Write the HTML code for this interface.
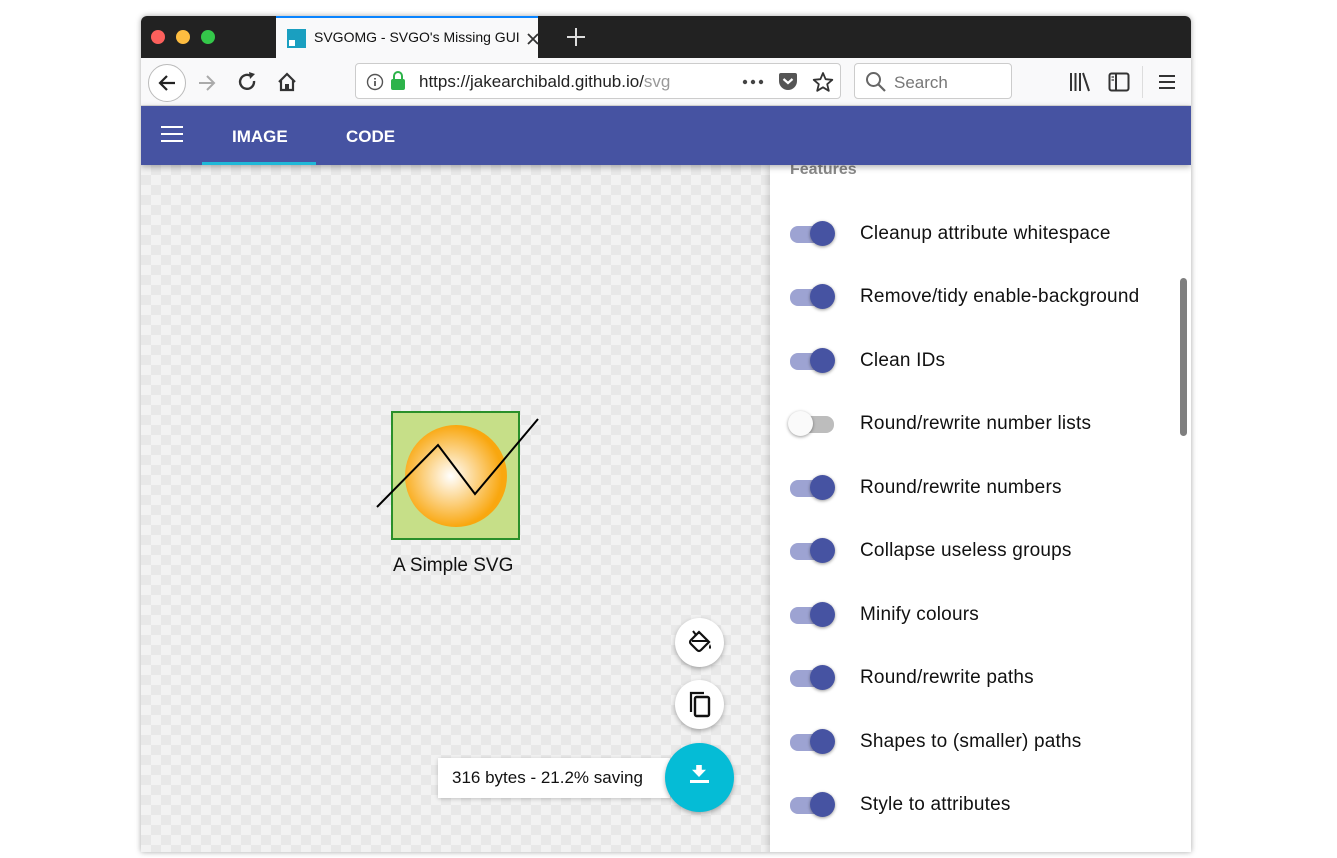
<!DOCTYPE html>
<html><head><meta charset="utf-8"><style>
*{margin:0;padding:0;box-sizing:border-box}
body{width:1337px;height:858px;background:#fff;font-family:"Liberation Sans",sans-serif;position:relative;overflow:hidden}
.win{position:absolute;left:141px;top:16px;width:1050px;height:836px;border-radius:6px 6px 0 0;overflow:hidden;box-shadow:0 0 6px rgba(0,0,0,.35)}
.title{position:absolute;left:0;top:0;width:100%;height:42px;background:#222}
.dot{position:absolute;top:14px;width:14px;height:14px;border-radius:50%}
.tab{position:absolute;left:135px;top:0;width:262px;height:42px;background:#f9f9fa;border-top:2px solid #0a84ff}
.toolbar{position:absolute;left:0;top:42px;width:100%;height:48px;background:#f9f9fa;border-bottom:1px solid #ddd}
.url{position:absolute;left:214px;top:5px;width:486px;height:36px;border:1px solid #ccc;border-radius:4px;background:#fff}
.search{position:absolute;left:713px;top:5px;width:158px;height:36px;border:1px solid #ccc;border-radius:4px;background:#fff}
.blue{position:absolute;left:0;top:90px;width:100%;height:59px;background:#4653a2;z-index:3;box-shadow:0 2px 6px rgba(0,0,0,.3)}
.blue span{position:absolute;top:21px;color:#fff;font-weight:bold;font-size:17px}
.canvas{position:absolute;left:0;top:149px;width:629px;height:700px;background-color:#f2f2f2;background-image:linear-gradient(45deg,#e8e8e8 25%,transparent 25%,transparent 75%,#e8e8e8 75%),linear-gradient(45deg,#e8e8e8 25%,transparent 25%,transparent 75%,#e8e8e8 75%);background-size:20px 20px;background-position:0 0,10px 10px}
.panel{position:absolute;left:629px;top:149px;width:421px;height:700px;background:#fff;box-shadow:-2px 0 6px rgba(0,0,0,.15)}
.row{position:absolute;left:20px;height:30px;width:390px}
.trk{position:absolute;left:0;top:9px;width:44px;height:17px;border-radius:8px;background:#9da3d2}
.knb{position:absolute;left:20px;top:4px;width:25px;height:25px;border-radius:50%;background:#4653a2;box-shadow:0 1px 3px rgba(0,0,0,.4)}
.off .trk{background:#bdbdbd}.off .knb{left:-2px;background:#fafafa}
.row span{position:absolute;left:70px;top:6px;font-size:19px;letter-spacing:0.2px;color:#111}
.fab{position:absolute;border-radius:50%;background:#fff;box-shadow:0 2px 5px rgba(0,0,0,.3)}
svg{position:absolute}
</style></head><body>
<div class="win">
<div class="title">
<div class="dot" style="left:10px;background:#fc605c"></div>
<div class="dot" style="left:35px;background:#fdbc40"></div>
<div class="dot" style="left:60px;background:#34c84a"></div>
<div class="tab"><div style="position:absolute;left:11px;top:11px;width:19px;height:19px;background:#1a9fc0"></div><div style="position:absolute;left:13px;top:22px;width:6px;height:6px;background:#fff"></div>
<span style="position:absolute;left:38px;top:11px;font-size:14px;color:#111">SVGOMG - SVGO's Missing GUI</span>
<svg style="left:251px;top:15px" width="12" height="12"><path d="M1 1L11 11M11 1L1 11" stroke="#333" stroke-width="1.8"/></svg></div>
<svg style="left:425px;top:11px" width="20" height="20"><path d="M10 1V19M1 10H19" stroke="#ddd" stroke-width="2"/></svg>
</div>
<div class="toolbar">
<div style="position:absolute;left:7px;top:6px;width:38px;height:38px;border:1px solid #bbb;border-radius:50%;background:#fff"></div>
<svg style="left:16px;top:15px" width="20" height="20"><path d="M18 10H3M10 3L3 10L10 17" stroke="#222" stroke-width="2.2" fill="none"/></svg>
<svg style="left:56px;top:15px" width="20" height="20"><path d="M2 10H17M10 3L17 10L10 17" stroke="#aaa" stroke-width="2" fill="none"/></svg>
<svg style="left:97px;top:14px" width="20" height="20"><path d="M16 9A7 7 0 1 1 12 3.5" stroke="#333" stroke-width="2.4" fill="none"/><path d="M11 0L17 2L12 7Z" fill="#333"/></svg>
<svg style="left:136px;top:14px" width="20" height="20"><path d="M2 10L10 2L18 10M4 8V18H16V8" stroke="#333" stroke-width="2.2" fill="none"/><rect x="8" y="12" width="4" height="6" fill="#333"/></svg>
<div class="url">
<svg style="left:10px;top:9px" width="18" height="18"><circle cx="9" cy="9" r="7.5" stroke="#555" stroke-width="1.4" fill="none"/><path d="M9 8V13M9 5V6.5" stroke="#555" stroke-width="1.8"/></svg>
<div style="position:absolute;left:35px;top:15px;width:14px;height:11px;background:#2db34a;border-radius:2px"></div><div style="position:absolute;left:37px;top:7px;width:10px;height:10px;border:2px solid #2db34a;border-radius:5px 5px 0 0"></div>
<span style="position:absolute;left:63px;top:8px;font-size:17px;color:#222">https://jakearchibald.github.io/<span style="color:#999">svg</span></span>
<svg style="left:386px;top:15px" width="22" height="6"><circle cx="3" cy="3" r="2.2" fill="#444"/><circle cx="11" cy="3" r="2.2" fill="#444"/><circle cx="19" cy="3" r="2.2" fill="#444"/></svg>
<svg style="left:422px;top:8px" width="20" height="20"><path d="M1 3Q1 1 3 1H17Q19 1 19 3V9A9 9 0 0 1 1 9Z" fill="#555"/><path d="M5.5 7L10 11L14.5 7" stroke="#fff" stroke-width="2.2" fill="none"/></svg>
<svg style="left:456px;top:7px" width="22" height="22"><path d="M11 2L13.6 8.2L20.3 8.8L15.2 13.2L16.8 19.8L11 16.3L5.2 19.8L6.8 13.2L1.7 8.8L8.4 8.2Z" stroke="#333" stroke-width="1.8" fill="none" stroke-linejoin="round"/></svg></div>
<div class="search">
<svg style="left:10px;top:7px" width="22" height="22"><circle cx="8.5" cy="8.5" r="6.5" stroke="#666" stroke-width="2" fill="none"/><path d="M13 13L20 20" stroke="#666" stroke-width="2.2"/></svg>
<span style="position:absolute;left:39px;top:9px;font-size:17px;color:#777">Search</span></div>
<svg style="left:928px;top:14px" width="22" height="20"><path d="M2 1V19M6.5 1V19M11 1V19M14 1L20 19" stroke="#333" stroke-width="2"/></svg>
<svg style="left:967px;top:14px" width="22" height="20"><rect x="1.5" y="1.5" width="19" height="17" rx="2" stroke="#333" stroke-width="2" fill="none"/><path d="M8 2V18" stroke="#333" stroke-width="2"/><path d="M3.5 5H6M3.5 8H6" stroke="#333" stroke-width="1.3"/></svg>
<div style="position:absolute;left:1001px;top:8px;width:1px;height:32px;background:#ddd"></div>
<svg style="left:1017px;top:16px" width="18" height="16"><path d="M1 2H17M1 8H17M1 14H17" stroke="#333" stroke-width="2"/></svg>
</div>
<div class="blue">
<div style="position:absolute;left:20px;top:20px;width:22px;height:2px;background:#fff;box-shadow:0 7px 0 #fff,0 14px 0 #fff"></div>
<span style="left:91px">IMAGE</span><span style="left:205px">CODE</span>
<div style="position:absolute;left:61px;top:56px;width:114px;height:3px;background:#1fb8d8"></div>
</div>
<div class="canvas">
<svg style="left:230px;top:240px" width="180" height="180">
<defs><radialGradient id="g" cx="0.45" cy="0.5" r="0.5"><stop offset="0" stop-color="#fff"/><stop offset="1" stop-color="#f9a70f"/></radialGradient></defs>
<rect x="21" y="7" width="127" height="127" fill="#c6df88" stroke="#2a8f2a" stroke-width="2"/>
<circle cx="85" cy="71" r="51" fill="url(#g)"/>
<polyline points="6,102 67,40 104,89 167,14" fill="none" stroke="#000" stroke-width="2"/>
</svg>
<span style="position:absolute;left:252px;top:390px;font-size:19px;color:#111">A Simple SVG</span>
<div class="fab" style="left:534px;top:453px;width:49px;height:49px">
<svg style="left:12px;top:11px" width="26" height="26"><path d="M4 11L12 3L22 13L14 21Q12 23 10 21L4 15Q2 13 4 11Z" stroke="#111" stroke-width="2.2" fill="none"/><path d="M5 12H21" stroke="#111" stroke-width="2"/><path d="M9 6L6 2" stroke="#111" stroke-width="2"/><path d="M23 15Q25 19 23 20Q21 19 23 15Z" fill="#111"/></svg></div>
<div class="fab" style="left:534px;top:515px;width:49px;height:49px">
<svg style="left:12px;top:11px" width="26" height="28"><path d="M4 21V2H17" stroke="#111" stroke-width="2.2" fill="none"/><rect x="8" y="6" width="14" height="19" rx="1.5" stroke="#111" stroke-width="2.4" fill="none"/></svg></div>
<div style="position:absolute;left:297px;top:593px;width:232px;height:40px;background:#fff;box-shadow:0 1px 4px rgba(0,0,0,.2)"><span style="position:absolute;left:14px;top:10px;font-size:17px;color:#111">316 bytes - 21.2% saving</span></div>
<div class="fab" style="left:524px;top:578px;width:69px;height:69px;background:#05bcd6"><div style="position:absolute;left:27px;top:22px;width:14px;height:12px;background:#fff;clip-path:polygon(30% 0,70% 0,70% 40%,100% 40%,50% 100%,0 40%,30% 40%)"></div><div style="position:absolute;left:25px;top:37px;width:19px;height:2.5px;background:#fff"></div></div>
</div>
<div class="panel">
<span style="position:absolute;left:20px;top:-4px;font-size:16px;color:#888;font-weight:bold">Features</span>
<div class="row" style="top:52px"><div class="trk"></div><div class="knb"></div><span>Cleanup attribute whitespace</span></div>
<div class="row" style="top:115px"><div class="trk"></div><div class="knb"></div><span>Remove/tidy enable-background</span></div>
<div class="row" style="top:179px"><div class="trk"></div><div class="knb"></div><span>Clean IDs</span></div>
<div class="row off" style="top:242px"><div class="trk"></div><div class="knb"></div><span>Round/rewrite number lists</span></div>
<div class="row" style="top:306px"><div class="trk"></div><div class="knb"></div><span>Round/rewrite numbers</span></div>
<div class="row" style="top:369px"><div class="trk"></div><div class="knb"></div><span>Collapse useless groups</span></div>
<div class="row" style="top:433px"><div class="trk"></div><div class="knb"></div><span>Minify colours</span></div>
<div class="row" style="top:496px"><div class="trk"></div><div class="knb"></div><span>Round/rewrite paths</span></div>
<div class="row" style="top:560px"><div class="trk"></div><div class="knb"></div><span>Shapes to (smaller) paths</span></div>
<div class="row" style="top:623px"><div class="trk"></div><div class="knb"></div><span>Style to attributes</span></div>
<div style="position:absolute;left:410px;top:113px;width:7px;height:158px;border-radius:4px;background:#7f7f7f"></div>
</div>
</div>
</body></html>
